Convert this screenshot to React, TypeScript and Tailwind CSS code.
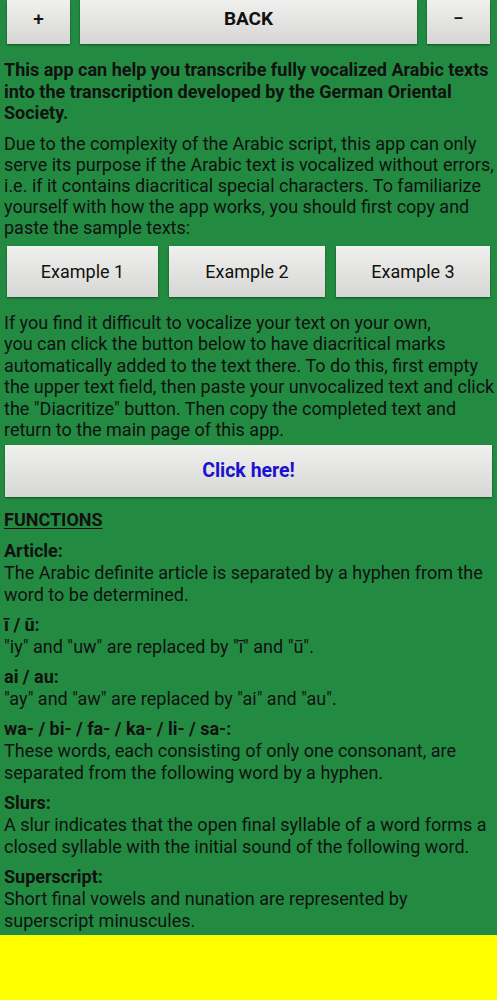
import React from "react";

const btn =
  "flex items-center justify-center bg-gradient-to-b from-[#f0f0ee] to-[#d6d6d4] shadow-[0_1px_2px_rgba(0,0,0,0.45)] text-[#111]";

function Lines({ lines }: { lines: string[] }) {
  return (
    <>
      {lines.map((l, i) => (
        <span key={i} className="block whitespace-nowrap">
          {l}
        </span>
      ))}
    </>
  );
}

function Section({ title, lines, first }: { title: string; lines: string[]; first?: boolean }) {
  return (
    <div className={first ? "mt-[9px]" : "mt-[8px]"}>
      <div className="font-bold text-[18px] leading-[22px]">{title}</div>
      <div className="text-[18px] leading-[22px]">
        <Lines lines={lines} />
      </div>
    </div>
  );
}

export default function App() {
  return (
    <div
      className="w-[497px] h-[1000px] flex flex-col bg-[#ffff00] overflow-hidden"
      style={{ fontFamily: "Roboto, 'Liberation Sans', sans-serif" }}
    >
      <div className="bg-[#238b41] text-[#111] pl-[4px] pr-[4px] pb-[3px]">
        <div className="flex gap-[10px] px-[3px] h-[44px]">
          <div className={btn + " w-[63px] text-[19px] font-medium pb-[6px]"}>+</div>
          <div className={btn + " flex-1 text-[19px] font-bold pb-[6px]"}>BACK</div>
          <div className={btn + " w-[63px] text-[19px] font-medium pb-[6px]"}>−</div>
        </div>
        <p className="mt-[15px] font-bold text-[18px] leading-[21.5px]">
          <Lines
            lines={[
              "This app can help you transcribe fully vocalized Arabic texts",
              "into the transcription developed by the German Oriental",
              "Society.",
            ]}
          />
        </p>
        <p className="mt-[9.5px] text-[18px] leading-[21px]">
          <Lines
            lines={[
              "Due to the complexity of the Arabic script, this app can only",
              "serve its purpose if the Arabic text is vocalized without errors,",
              "i.e. if it contains diacritical special characters. To familiarize",
              "yourself with how the app works, you should first copy and",
              "paste the sample texts:",
            ]}
          />
        </p>
        <div className="flex gap-[11px] px-[3px] mt-[7.5px] h-[51px]">
          <div className={btn + " w-[151px] text-[18px]"}>Example 1</div>
          <div className={btn + " w-[156px] text-[18px]"}>Example 2</div>
          <div className={btn + " flex-1 text-[18px]"}>Example 3</div>
        </div>
        <p className="mt-[15px] text-[18px] leading-[21.5px]">
          <Lines
            lines={[
              "If you find it difficult to vocalize your text on your own,",
              "you can click the button below to have diacritical marks",
              "automatically added to the text there. To do this, first empty",
              "the upper text field, then paste your unvocalized text and click",
              'the "Diacritize" button. Then copy the completed text and',
              "return to the main page of this app.",
            ]}
          />
        </p>
        <div className={btn + " mx-[1px] mt-[4px] h-[52px]"}>
          <span className="text-[19.5px] font-bold text-[#1a12d0]">Click here!</span>
        </div>
        <div className="mt-[12.5px] font-bold text-[18px] leading-[22px] underline underline-offset-2">FUNCTIONS</div>
        <Section
          first
          title="Article:"
          lines={["The Arabic definite article is separated by a hyphen from the", "word to be determined."]}
        />
        <Section title="ī / ū:" lines={['"iy" and "uw" are replaced by "ī" and "ū".']} />
        <Section title="ai / au:" lines={['"ay" and "aw" are replaced by "ai" and "au".']} />
        <Section
          title="wa- / bi- / fa- / ka- / li- / sa-:"
          lines={["These words, each consisting of only one consonant, are", "separated from the following word by a hyphen."]}
        />
        <Section
          title="Slurs:"
          lines={[
            "A slur indicates that the open final syllable of a word forms a",
            "closed syllable with the initial sound of the following word.",
          ]}
        />
        <Section
          title="Superscript:"
          lines={["Short final vowels and nunation are represented by", "superscript minuscules."]}
        />
      </div>
    </div>
  );
}
